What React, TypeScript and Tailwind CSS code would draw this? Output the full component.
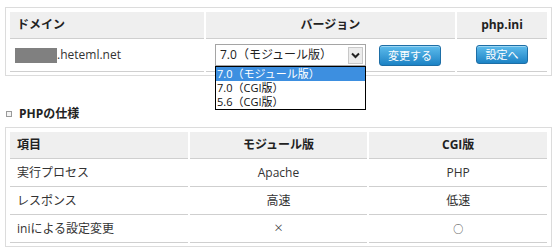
import React from "react";

const font = { fontFamily: '"Open Sans", "Noto Sans CJK JP", sans-serif' };

function BlueButton({ label, w }: { label: string; w: string }) {
  return (
    <button
      className={`${w} flex items-center justify-center rounded-[3px] border border-[#1d6ea6] bg-gradient-to-b from-[#5cbcec] to-[#1b83c5] text-[11px] leading-none text-white shadow-[inset_0_1px_0_rgba(255,255,255,0.4)]`}
    >
      {label}
    </button>
  );
}

function VersionSelect() {
  return (
    <div className="relative h-[22px] w-[151px]">
      <div className="flex h-full w-full items-center border border-[#a5a5a5] bg-white pl-[4px] pr-[2px]">
        <span className="flex-1 text-[12px] leading-none text-[#222]">7.0（モジュール版）</span>
        <span className="flex h-[17px] w-[15px] items-center justify-center border border-[#c8c8c8] bg-[#ececec]">
          <svg width="9" height="7" viewBox="0 0 9 7">
            <path d="M1 1.5 L4.5 5 L8 1.5" fill="none" stroke="#222" strokeWidth="2" />
          </svg>
        </span>
      </div>
      <ul className="absolute left-0 top-[22px] z-10 w-[151px] border border-black bg-white text-[11px] text-[#111]">
        <li className="flex h-[14px] items-center overflow-hidden bg-[#3d8fe0] pl-[1px] leading-[12px] text-white">7.0（モジュール版）</li>
        <li className="flex h-[14px] items-center overflow-hidden pl-[1px] leading-[12px]">7.0（CGI版）</li>
        <li className="flex h-[14px] items-center overflow-hidden pl-[1px] leading-[12px]">5.6（CGI版）</li>
      </ul>
    </div>
  );
}

const specs = [
  ["実行プロセス", "Apache", "PHP"],
  ["レスポンス", "高速", "低速"],
  ["iniによる設定変更", "×", "○"],
];

export default function App() {
  return (
    <div className="min-h-[249px] bg-white pt-[7px] text-[#333]" style={font}>
      <div className="ml-[5px] w-[547px] border border-[#dcdcdc] px-[2px] pb-[3px] pt-[4px]">
        <table className="w-full table-fixed border-separate border-spacing-x-[2px] border-spacing-y-0">
          <thead>
            <tr className="bg-[#efefef] text-[12px] font-bold text-[#222]">
              <th className="h-[27px] w-[194px] border-b border-[#cfcfcf] pl-[7px] text-left">ドメイン</th>
              <th className="border-b border-[#cfcfcf] text-center">バージョン</th>
              <th className="w-[90px] border-b border-[#cfcfcf] text-center">php.ini</th>
            </tr>
          </thead>
          <tbody>
            <tr className="text-[12px]">
              <td className="h-[33px] border-b border-[#cfcfcf] pl-[5px]">
                <div className="flex items-center">
                  <span className="h-[15px] w-[42px] bg-[#808080]" />
                  <span>.heteml.net</span>
                </div>
              </td>
              <td className="border-b border-[#cfcfcf]">
                <div className="flex items-center gap-[13px] pl-[9px]">
                  <VersionSelect />
                  <BlueButton label="変更する" w="h-[21px] w-[62px]" />
                </div>
              </td>
              <td className="border-b border-[#cfcfcf]">
                <div className="flex justify-center pb-[2px]">
                  <BlueButton label="設定へ" w="h-[19px] w-[52px]" />
                </div>
              </td>
            </tr>
          </tbody>
        </table>
      </div>

      <div className="mt-[31px] flex h-[14px] items-center pl-[6px]">
        <span className="h-[6px] w-[6px] border border-[#9a9a9a] bg-[#f4f4f4]" />
        <span className="ml-[7px] text-[12px] font-bold leading-[14px] text-[#222]">PHPの仕様</span>
      </div>

      <div className="ml-[5px] mt-[6px] w-[547px] border border-[#dcdcdc] px-[2px] pb-[3px] pt-[4px]">
        <table className="w-full table-fixed border-separate border-spacing-x-[2px] border-spacing-y-0 text-[12px]">
          <thead>
            <tr className="bg-[#efefef] font-bold text-[#222]">
              <th className="h-[27px] border-b border-[#cfcfcf] pl-[7px] text-left">項目</th>
              <th className="border-b border-[#cfcfcf] text-center">モジュール版</th>
              <th className="border-b border-[#cfcfcf] text-center">CGI版</th>
            </tr>
          </thead>
          <tbody>
            {specs.map(([item, mod, cgi]) => (
              <tr key={item}>
                <td className="h-[28px] border-b border-[#cfcfcf] pl-[7px]">{item}</td>
                <td className="border-b border-[#cfcfcf] text-center">
                  {mod === "×" ? <span className="text-[15px] font-light leading-none">×</span> : mod}
                </td>
                <td className="border-b border-[#cfcfcf] text-center">
                  {cgi === "○" ? <span className="text-[10px] leading-none">○</span> : cgi}
                </td>
              </tr>
            ))}
          </tbody>
        </table>
      </div>
    </div>
  );
}
